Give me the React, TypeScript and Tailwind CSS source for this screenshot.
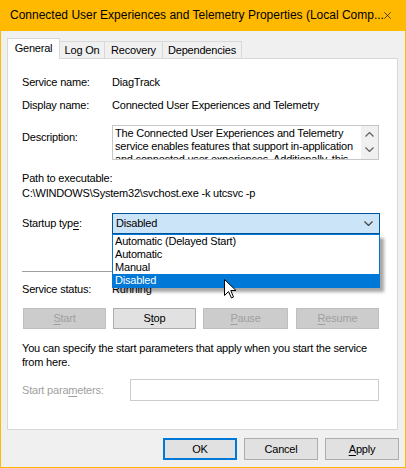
import React from 'react';

const WinButton: React.FC<{ disabled?: boolean; className?: string; children: React.ReactNode }> = ({
  disabled,
  className = '',
  children,
}) => (
  <div
    className={`h-[21px] flex items-center justify-center border ${
      disabled ? 'bg-[#cccccc] border-[#bfbfbf] text-[#a0a0a0]' : 'bg-[#e1e1e1] border-[#adadad] text-black'
    } ${className}`}
  >
    {children}
  </div>
);

const U: React.FC<{ children: React.ReactNode }> = ({ children }) => (
  <span className="underline underline-offset-[2px]">{children}</span>
);

const SmallChevron: React.FC<{ up?: boolean; color?: string }> = ({ up, color = '#606060' }) => (
  <svg width="9" height="5" viewBox="0 0 9 5">
    <path d={up ? 'M0.5 4.5 L4.5 0.5 L8.5 4.5' : 'M0.5 0.5 L4.5 4.5 L8.5 0.5'} fill="none" stroke={color} strokeWidth="1.2" />
  </svg>
);

export default function App() {
  return (
    <div className="w-[406px] h-[468px] flex flex-col bg-[#f0f0f0] border-x border-b border-[#ffb900] font-['Liberation_Sans',Arial,sans-serif] text-[11px] tracking-[-0.2px] text-black leading-[15px] overflow-hidden">
      {/* title bar */}
      <div className="h-[31px] shrink-0 bg-[#ffb900] flex items-center pl-[9px] pr-[10px]">
        <span className="flex-1 text-[12px] tracking-normal whitespace-nowrap">
          Connected User Experiences and Telemetry Properties (Local Comp...
        </span>
        <svg width="11" height="11" viewBox="0 0 11 11" className="mr-[4px]">
          <path d="M0.5 0.5 L10.5 10.5 M10.5 0.5 L0.5 10.5" stroke="#000" strokeWidth="1" />
        </svg>
      </div>

      <div className="pl-[6px] flex flex-col">
        {/* tabs */}
        <div className="mt-[7px] h-[20px] flex items-end whitespace-nowrap">
          <div className="relative z-10 -mb-px h-[21px] w-[53px] bg-white border-x border-t border-[#d9d9d9] flex items-center justify-center pb-[1px]">
            General
          </div>
          <div className="h-[17px] w-[45px] border-t border-r border-[#d9d9d9] flex items-center justify-center">
            Log On
          </div>
          <div className="h-[17px] w-[58px] border-t border-r border-[#d9d9d9] flex items-center justify-center">
            Recovery
          </div>
          <div className="h-[17px] w-[79px] border-t border-r border-[#d9d9d9] flex items-center justify-center">
            Dependencies
          </div>
        </div>

        {/* panel */}
        <div className="w-[391px] h-[372px] bg-white border border-[#d9d9d9] pl-[14px] flex flex-col">
          <div className="mt-[16px] flex">
            <div className="w-[90px]">Service name:</div>
            <div>DiagTrack</div>
          </div>
          <div className="mt-[8px] flex">
            <div className="w-[90px]">Display name:</div>
            <div>Connected User Experiences and Telemetry</div>
          </div>
          <div className="mt-[12px] flex">
            <div className="w-[90px] pt-[5px]">Description:</div>
            <div className="w-[267px] h-[35px] border border-[#c6c6c6] flex overflow-hidden">
              <div className="flex-1 min-w-0 pl-[2px] pt-[1px] leading-[13px] whitespace-nowrap overflow-hidden">
                The Connected User Experiences and Telemetry
                <br />
                service enables features that support in-application
                <br />
                and connected user experiences. Additionally, this
              </div>
              <div className="w-[17px] shrink-0 bg-[#f0f0f0] flex flex-col items-center pt-[6px] gap-[10px]">
                <SmallChevron up />
                <SmallChevron />
              </div>
            </div>
          </div>
          <div className="mt-[11px]">Path to executable:</div>
          <div>C:\WINDOWS\System32\svchost.exe -k utcsvc -p</div>

          <div className="mt-[12px] flex items-center">
            <div className="w-[90px]">
              Startup typ<U>e</U>:
            </div>
            <div className="relative w-[268px]">
              <div className="h-[21px] bg-[#cce4f7] border border-[#005499] flex items-center pl-[3px] pr-[6px]">
                <span className="flex-1">Disabled</span>
                <SmallChevron color="#404040" />
              </div>
              {/* open list */}
              <div className="absolute left-0 top-[21px] w-[268px] z-20 bg-white border border-[#0078d7] shadow-[4px_4px_3px_rgba(0,0,0,0.35)] leading-[13px]">
                <div className="h-[13px] pl-[2px]">Automatic (Delayed Start)</div>
                <div className="h-[13px] pl-[2px]">Automatic</div>
                <div className="h-[13px] pl-[2px]">Manual</div>
                <div className="h-[13px] pl-[2px] bg-[#0078d7] text-white">Disabled</div>
              </div>
            </div>
          </div>

          <div className="mt-[37px] w-[357px] h-px bg-[#a0a0a0]" />

          <div className="mt-[10px] flex">
            <div className="w-[90px]">Service status:</div>
            <div>Running</div>
          </div>

          <div className="mt-[11px] flex pl-[1px]">
            <WinButton disabled className="w-[83px]">
              <U>S</U>tart
            </WinButton>
            <WinButton className="w-[83px] ml-[7px]">
              S<U>t</U>op
            </WinButton>
            <WinButton disabled className="w-[85px] ml-[7px]">
              <U>P</U>ause
            </WinButton>
            <WinButton disabled className="w-[83px] ml-[8px]">
              <U>R</U>esume
            </WinButton>
          </div>

          <div className="mt-[12px] leading-[14px] whitespace-nowrap">
            You can specify the start parameters that apply when you start the service
            <br />
            from here.
          </div>

          <div className="mt-[10px] flex items-center">
            <div className="w-[108px] text-[#a0a0a0]">
              Start para<U>m</U>eters:
            </div>
            <div className="w-[249px] h-[22px] border border-[#cccccc] bg-white" />
          </div>
        </div>

        {/* dialog buttons */}
        <div className="mt-[8px] flex justify-end gap-[7px] pr-[6px]">
          <div className="w-[74px] h-[22px] border-2 border-[#0078d7] bg-[#e1e1e1] flex items-center justify-center">
            OK
          </div>
          <div className="w-[74px] h-[22px] border border-[#adadad] bg-[#e1e1e1] flex items-center justify-center">
            Cancel
          </div>
          <div className="w-[74px] h-[22px] border border-[#adadad] bg-[#e1e1e1] flex items-center justify-center">
            <U>A</U>pply
          </div>
        </div>
      </div>

      {/* mouse pointer */}
      <svg
        width="13"
        height="20"
        viewBox="0 0 13 20"
        className="absolute left-[224px] top-[279px] z-30"
      >
        <path d="M0.5 0.5 L0.5 16.5 L4.5 12.5 L7.5 19 L9.5 18 L6.8 11.5 L12 11.5 Z" fill="#fff" stroke="#000" strokeWidth="1" />
      </svg>
    </div>
  );
}
